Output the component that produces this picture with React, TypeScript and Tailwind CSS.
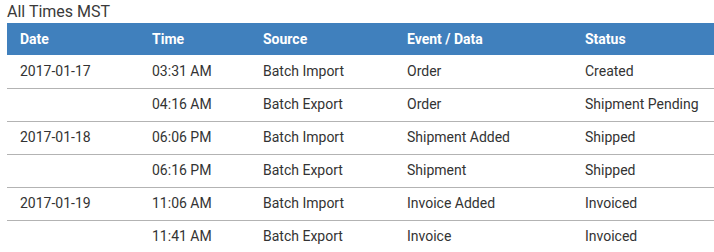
import React from "react";

const rows = [
  { date: "2017-01-17", time: "03:31 AM", source: "Batch Import", event: "Order", status: "Created" },
  { date: "", time: "04:16 AM", source: "Batch Export", event: "Order", status: "Shipment Pending" },
  { date: "2017-01-18", time: "06:06 PM", source: "Batch Import", event: "Shipment Added", status: "Shipped" },
  { date: "", time: "06:16 PM", source: "Batch Export", event: "Shipment", status: "Shipped" },
  { date: "2017-01-19", time: "11:06 AM", source: "Batch Import", event: "Invoice Added", status: "Invoiced" },
  { date: "", time: "11:41 AM", source: "Batch Export", event: "Invoice", status: "Invoiced" },
];

export default function App() {
  return (
    <div className="w-[714px] h-[252px] overflow-hidden bg-white font-['Roboto',sans-serif] text-[#333]">
      <div className="pl-[7px] h-[23px] leading-[23px] text-[16px] text-[#3a3a3a]">All Times MST</div>
      <table className="ml-[7px] w-[707px] border-collapse table-fixed text-[14px]">
        <colgroup>
          <col className="w-[132px]" />
          <col className="w-[111px]" />
          <col className="w-[144px]" />
          <col className="w-[178px]" />
          <col />
        </colgroup>
        <thead>
          <tr className="bg-[#4080bd] text-white h-[32px]">
            <th className="text-left font-bold px-[13px] py-0">Date</th>
            <th className="text-left font-bold px-[13px] py-0">Time</th>
            <th className="text-left font-bold px-[13px] py-0">Source</th>
            <th className="text-left font-bold px-[13px] py-0">Event / Data</th>
            <th className="text-left font-bold px-[13px] py-0">Status</th>
          </tr>
        </thead>
        <tbody>
          {rows.map((r, i) => (
            <tr key={i} className="h-[33px] border-b border-[#b3b3b3]">
              <td className="px-[13px] py-0">{r.date}</td>
              <td className="px-[13px] py-0">{r.time}</td>
              <td className="px-[13px] py-0">{r.source}</td>
              <td className="px-[13px] py-0">{r.event}</td>
              <td className="px-[13px] py-0 whitespace-nowrap">{r.status}</td>
            </tr>
          ))}
        </tbody>
      </table>
    </div>
  );
}
